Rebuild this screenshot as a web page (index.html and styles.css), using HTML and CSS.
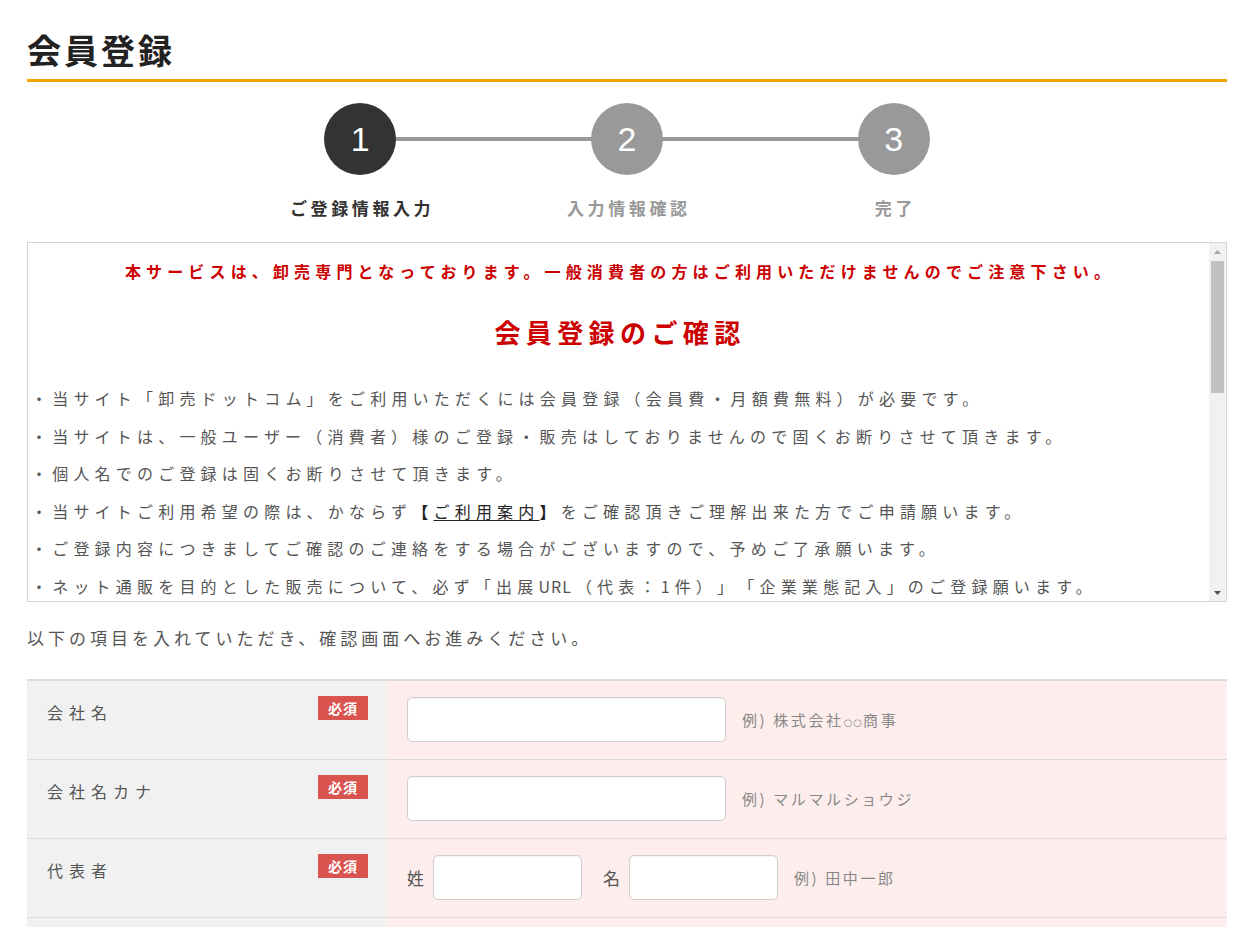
FILE: index.html
```html
<!DOCTYPE html>
<html lang="ja">
<head>
<meta charset="utf-8">
<title>会員登録</title>
<link rel="stylesheet" href="styles.css">
</head>
<body>
<div class="page">
  <h1 class="title">会員登録</h1>

  <ol class="steps">
    <li class="step is-current"><span class="step-num">1</span><span class="step-label">ご登録情報入力</span></li>
    <li class="step"><span class="step-num">2</span><span class="step-label">入力情報確認</span></li>
    <li class="step"><span class="step-num">3</span><span class="step-label">完了</span></li>
  </ol>

  <div class="terms">
    <div class="terms-body">
      <p class="terms-alert">本サービスは、卸売専門となっております。一般消費者の方はご利用いただけませんのでご注意下さい。</p>
      <h2 class="terms-title">会員登録のご確認</h2>
      <ul class="terms-list">
        <li>・当サイト「卸売ドットコム」をご利用いただくには会員登録（会員費・月額費無料）が必要です。</li>
        <li>・当サイトは、一般ユーザー（消費者）様のご登録・販売はしておりませんので固くお断りさせて頂きます。</li>
        <li>・個人名でのご登録は固くお断りさせて頂きます。</li>
        <li>・当サイトご利用希望の際は、かならず<span class="bracket">【<a class="terms-link" href="#">ご利用案内</a>】</span>をご確認頂きご理解出来た方でご申請願います。</li>
        <li>・ご登録内容につきましてご確認のご連絡をする場合がございますので、予めご了承願います。</li>
        <li>・ネット通販を目的とした販売について、必ず「出展<span class="latin">URL</span>（代表：<span class="latin">1</span>件）」「企業業態記入」のご登録願います。</li>
      </ul>
    </div>
    <div class="scrollbar" aria-hidden="true">
      <span class="sb-btn"><svg width="7" height="4" viewBox="0 0 7 4"><path d="M0 4 L3.5 0 L7 4 Z" fill="#a3a3a3"/></svg></span>
      <span class="sb-track"><span class="sb-thumb"></span></span>
      <span class="sb-btn"><svg width="7" height="4" viewBox="0 0 7 4"><path d="M0 0 L7 0 L3.5 4 Z" fill="#505050"/></svg></span>
    </div>
  </div>

  <p class="lead">以下の項目を入れていただき、確認画面へお進みください。</p>

  <div class="form">
    <div class="form-row">
      <div class="form-head"><span class="form-label">会社名</span><span class="badge">必須</span></div>
      <div class="form-field">
        <input class="input input-wide" type="text">
        <span class="example">例) 株式会社<span class="dots">○○</span>商事</span>
      </div>
    </div>
    <div class="form-row">
      <div class="form-head"><span class="form-label">会社名カナ</span><span class="badge">必須</span></div>
      <div class="form-field">
        <input class="input input-wide" type="text">
        <span class="example">例) マルマルショウジ</span>
      </div>
    </div>
    <div class="form-row">
      <div class="form-head"><span class="form-label">代表者</span><span class="badge">必須</span></div>
      <div class="form-field">
        <span class="sub-label">姓</span>
        <input class="input input-name" type="text">
        <span class="sub-label sub-label-gap">名</span>
        <input class="input input-name" type="text">
        <span class="example">例) 田中一郎</span>
      </div>
    </div>
    <div class="form-row">
      <div class="form-head"><span class="form-label">代表者カナ</span><span class="badge">必須</span></div>
      <div class="form-field">
        <span class="sub-label">セイ</span>
        <input class="input input-name" type="text">
      </div>
    </div>
  </div>
</div>
</body>
</html>
```

FILE: styles.css
```css
* {
  box-sizing: border-box;
}

html, body {
  margin: 0;
  padding: 0;
  background: #fff;
}

body {
  font-family: "Noto Sans CJK JP", "Noto Sans", sans-serif;
  color: #555;
  overflow: hidden;
  text-spacing-trim: space-all;
}

.page {
  width: 1200px;
  margin-left: 27px;
}

.title {
  margin: 0;
  padding: 28px 0 7px;
  font-size: 34px;
  line-height: 44px;
  font-weight: 700;
  letter-spacing: 3px;
  color: #222;
  border-bottom: 3px solid #f5a200;
}

/* steps */
.steps {
  list-style: none;
  margin: 21px auto 0;
  padding: 0;
  width: 800px;
  display: grid;
  grid-template-columns: repeat(3, 1fr);
  position: relative;
}

.steps::before {
  content: "";
  position: absolute;
  top: 34px;
  left: 133px;
  right: 133px;
  height: 4px;
  background: #999;
}

.step {
  display: flex;
  flex-direction: column;
  align-items: center;
  position: relative;
}

.step-num {
  width: 72px;
  height: 72px;
  border-radius: 50%;
  background: #999;
  color: #fff;
  font-family: "Liberation Sans", Arial, sans-serif;
  font-size: 34px;
  line-height: 72px;
  text-align: center;
}

.step-label {
  margin-top: 21px;
  font-size: 17px;
  line-height: 24px;
  font-weight: 700;
  letter-spacing: 3.6px;
  margin-right: -3.6px;
  color: #999;
}

.is-current .step-num {
  background: #333;
}

.is-current .step-label {
  color: #333;
}

/* terms box */
.terms {
  margin-top: 22px;
  height: 360px;
  border: 1px solid #d4d4d4;
  display: flex;
}

.terms-body {
  flex: 1;
  overflow: hidden;
  padding: 16px 0 0 3px;
}

.terms-alert {
  margin: 0;
  text-align: center;
  color: #cc0000;
  font-size: 16px;
  line-height: 24px;
  font-weight: 700;
  letter-spacing: 5.15px;
}

.terms-title {
  margin: 31px 0 0;
  text-align: center;
  color: #cc0000;
  font-size: 26px;
  line-height: 36px;
  font-weight: 700;
  letter-spacing: 5.4px;
}

.terms-list {
  list-style: none;
  margin: 30px 0 0;
  padding: 0;
  font-size: 16px;
  line-height: 37.5px;
  letter-spacing: 5.2px;
  color: #555;
  white-space: nowrap;
}

.latin {
  letter-spacing: 1px;
  margin-right: 4px;
}

.bracket {
  color: #222;
  font-weight: 700;
}

.terms-link {
  color: #222;
  font-weight: 400;
  text-decoration: underline;
  text-underline-offset: 2px;
}

.scrollbar {
  width: 17px;
  flex: none;
  background: #f1f1f1;
  display: flex;
  flex-direction: column;
}

.sb-btn {
  height: 17px;
  flex: none;
  display: flex;
  align-items: center;
  justify-content: center;
}

.sb-track {
  flex: 1;
  padding: 1px 2px 0;
}

.sb-thumb {
  display: block;
  height: 132px;
  background: #c1c1c1;
}

/* lead */
.lead {
  margin: 24px 0 29px;
  font-size: 17px;
  line-height: 24px;
  letter-spacing: 4px;
  color: #555;
}

/* form */
.form {
  border-top: 2px solid #dcdcdc;
}

.form-row {
  display: grid;
  grid-template-columns: 360px 1fr;
  border-bottom: 1px solid #dcdcdc;
}

.form-head {
  background: #f1f1f1;
  display: flex;
  justify-content: space-between;
  align-items: flex-start;
  padding: 15px 19px 0 20px;
}

.form-label {
  margin-top: 4px;
  font-size: 16px;
  line-height: 24px;
  letter-spacing: 6px;
  color: #555;
}

.badge {
  width: 50px;
  height: 24px;
  background: #d9534f;
  color: #fff;
  font-size: 14px;
  font-weight: 700;
  line-height: 24px;
  text-align: center;
  letter-spacing: 1px;
}

.form-field {
  background: #fdeeed;
  display: flex;
  align-items: center;
  padding: 16px 20px 17px;
}

.input {
  height: 45px;
  border: 1px solid #cfcfcf;
  border-radius: 5px;
  background: #fff;
  box-shadow: inset 0 1px 2px rgba(0, 0, 0, 0.06);
  font: inherit;
  margin: 0;
}

.input-wide {
  width: 319px;
}

.input-name {
  width: 149px;
}

.sub-label {
  font-size: 17px;
  color: #555;
  margin-right: 9px;
}

.sub-label-gap {
  margin-left: 21px;
}

.example {
  margin-left: 16px;
  font-size: 15px;
  letter-spacing: 2.6px;
  color: #888;
}

.dots {
  font-family: "DejaVu Sans", sans-serif;
  font-size: 10px;
  letter-spacing: 1px;
}
```
